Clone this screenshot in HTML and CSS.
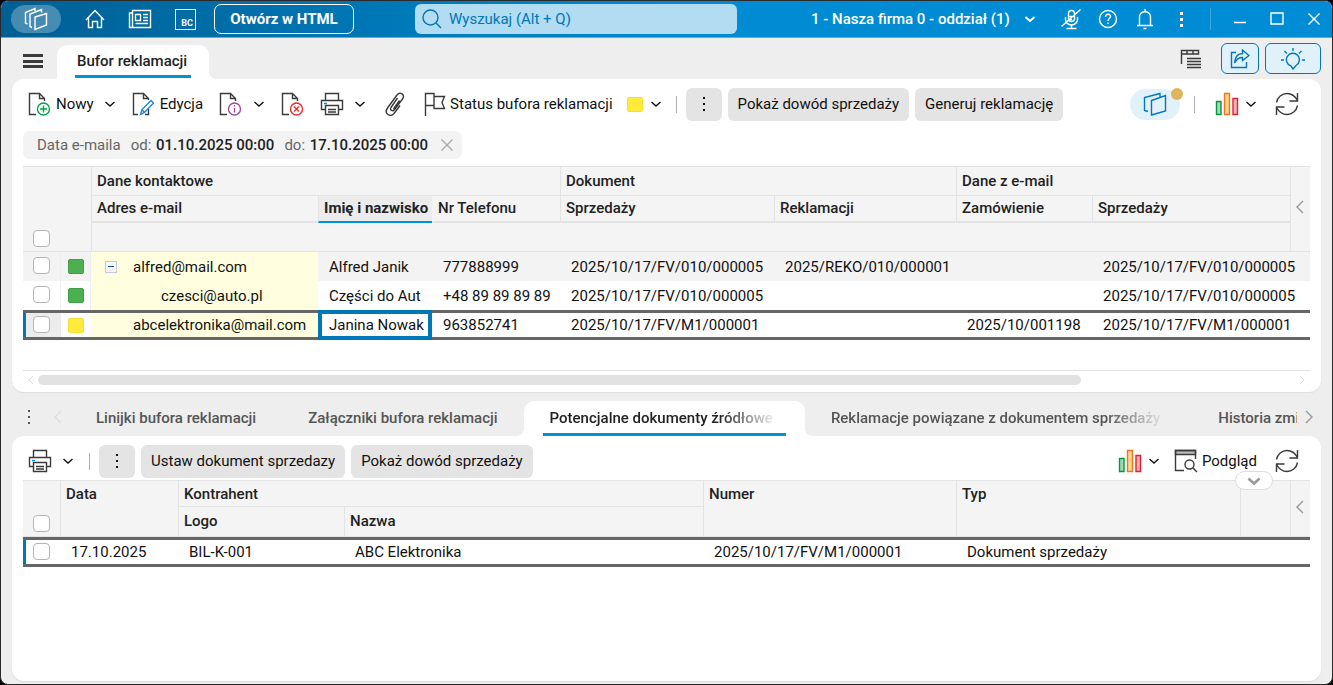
FILE: index.html
```html
<!DOCTYPE html>
<html lang="pl">
  <head>
    <meta charset="UTF-8" />
    <meta name="viewport" content="width=device-width, initial-scale=1.0" />
    <title>Bufor reklamacji</title>
    <link rel="stylesheet" href="styles.css">
  </head>
  <body>
    <!-- Ikony -->
    <svg class="sprite" aria-hidden="true">
      <symbol id="i-chevron" viewBox="0 0 12 8"><path d="M1.500 2l4.500 4 4.500-4" /></symbol>
      <symbol id="i-left" viewBox="0 0 8 14"><path d="M7 1L1 7l6 6" /></symbol>
      <symbol id="i-right" viewBox="0 0 8 14"><path d="M1 1l6 6-6 6" /></symbol>
      <symbol id="i-dots" viewBox="0 0 4 16">
        <path d="M1 1h2v2H1zM1 7h2v2H1zM1 13h2v2H1z" fill="currentColor" stroke="none" />
      </symbol>
      <symbol id="i-printer" viewBox="0 0 24 24">
        <path d="M5.500 8V1.500h13V8M5.500 17.500h-4v-9h21v9h-4M5.500 13.500h13v9h-13z" />
        <path d="M8 17.500h8M8 20h8" />
        <path d="M4 11.500h3" stroke="#0092d8" />
      </symbol>
      <symbol id="i-chart" viewBox="0 0 24 24">
        <path d="M1.500 9.500h4.500v13H1.500z" fill="#a5d8b3" stroke="#009a44" />
        <path d="M9.500 1.500h5v21h-5z" fill="#fdd58a" stroke="#ee7623" />
        <path d="M18 6.500h4.500v16H18z" fill="#f6b2b8" stroke="#e01f2d" />
      </symbol>
      <symbol id="i-refresh" viewBox="0 0 24 24">
        <path d="M1.500 10.500C2.500 5 7 1.500 12 1.500c4.500 0 8 2.500 10.500 7M22.500 1v8h-8M22.500 13.500C21.500 19 17 22.500 12 22.500c-4.500 0-8-2.500-10.500-7M1.500 23v-8h8" />
      </symbol>
    </svg>

    <div class="window">
      <!-- Pasek tytułowy -->
      <header class="titlebar">
        <button class="logo" aria-label="Menu główne">
          <svg width="24" height="24" viewBox="0 0 24 24">
            <path d="M3.500 17l-2-1V5.500l9.500-4v2.500M8 20.500l-2-1V7l11.500-4.500v3M11 10l11.500-3.500V18L11 22.500z" />
          </svg>
        </button>
        <nav class="quick">
          <a href="#" aria-label="Start">
            <svg width="20" height="20" viewBox="0 0 20 20"><path d="M1 11l9-9.500L19 11M3.500 9v9.500h4v-6h5v6h4V9" /></svg>
          </a>
          <a href="#" aria-label="Aktualności">
            <svg width="24" height="20" viewBox="0 0 24 20">
              <path d="M4.500 1.500h18v17h-18zM4.500 4h-3v14.500h3M7.500 5.500h5v6h-5zM15 5.500h5M15 8.500h5M15 11.500h5M7.500 14.500H20" />
            </svg>
          </a>
          <a class="bc" href="#">BC</a>
        </nav>
        <button class="open-html">Otwórz w HTML</button>
        <label class="search">
          <svg width="20" height="20" viewBox="0 0 20 20"><circle cx="8.500" cy="8.500" r="7.500" /><path d="M14 14l5 5" /></svg>
          <input type="text" aria-label="Wyszukaj" placeholder="Wyszukaj (Alt + Q)" />
        </label>
        <div class="company">
          <select aria-label="Firma i oddział">
            <option>1 - Nasza firma 0 - oddział (1)</option>
          </select>
          <svg class="chev bold" width="12" height="8"><use href="#i-chevron" /></svg>
        </div>
        <div class="title-buttons">
          <button aria-label="Mikrofon">
            <svg width="20" height="22" viewBox="0 0 20 22">
              <path d="M7.500 5.500a3 3 0 0 1 6 0v5a3 3 0 0 1-6 0zM4.500 9v2.500a6 5.500 0 0 0 12 0V9M10.500 17v3.500M5.500 20.500h10M8 8.500h3M8 11.500h3M19.500 1.500l-19 17" />
            </svg>
          </button>
          <button aria-label="Pomoc">
            <svg width="20" height="20" viewBox="0 0 20 20">
              <circle cx="10" cy="10" r="8.500" />
              <path d="M7.500 8c0-3.500 5-3.500 5-.5 0 2-2.500 2-2.500 4.500M10 13.500V15" />
            </svg>
          </button>
          <button aria-label="Powiadomienia">
            <svg width="18" height="22" viewBox="0 0 18 22">
              <path d="M1 17.500h16M3.500 17V9c0-7 11-7 11 0v8M9 1v2.500M7.500 20.500h3" />
            </svg>
          </button>
          <button aria-label="Więcej">
            <svg width="4" height="16" viewBox="0 0 4 16"><path d="M0 1h3v3H0zM0 7h3v3H0zM0 13h3v3H0z" fill="currentColor" stroke="none" /></svg>
          </button>
          <span class="title-sep"></span>
          <button aria-label="Minimalizuj"><svg width="14" height="14" viewBox="0 0 14 14"><path d="M1 10.500h12" /></svg></button>
          <button aria-label="Maksymalizuj"><svg width="14" height="14" viewBox="0 0 14 14"><path d="M1 1h12v11H1z" /></svg></button>
          <button aria-label="Zamknij"><svg width="14" height="14" viewBox="0 0 14 14"><path d="M1.500 1.500l11 11M12.500 1.500l-11 11" /></svg></button>
        </div>
      </header>

      <!-- Zakładki okna -->
      <div class="tabrow">
        <button class="hamburger" aria-label="Menu"><span></span><span></span><span></span></button>
        <button class="doc-tab">Bufor reklamacji</button>
        <div class="tabrow-right">
          <svg width="22" height="20" viewBox="0 0 22 20">
            <path d="M1.500 15V1.500h17V5h-17M7 1.500V5M13 1.500V5" />
            <path d="M7 9.500h14M7 12.500h14M7 15.500h14M7 18.500h14" />
          </svg>
          <button class="outline-btn share" aria-label="Udostępnij">
            <svg width="20" height="20" viewBox="0 0 20 20">
              <path d="M6 3.500H1.500v15h15V13M12.500 1l6.500 5.500-6.500 5V8.500c-4 0-6 1.500-8 5.500.5-6 3.500-9.500 8-9.500z" />
            </svg>
          </button>
          <button class="outline-btn hint" aria-label="Podpowiedzi">
            <svg width="26" height="22" viewBox="0 0 26 22">
              <path d="M11 18a6.500 6.500 0 1 1 5-.5L13 21z" />
              <path d="M13 0v3M4.500 3L7 5.500M21.500 3L19 5.500M1 12h3M22 12h3" />
            </svg>
          </button>
        </div>
      </div>

      <!-- Lista główna -->
      <main class="panel">
        <div class="toolbar">
          <button class="tool new">
            <svg width="24" height="24" viewBox="0 0 24 24">
              <path d="M8 22.500H1.500v-21h10l5 5V9M11.500 1.500v5h5" />
              <g stroke="#00a651"><circle cx="15.500" cy="17" r="6" /><path d="M15.500 13.500v7M12 17h7" /></g>
            </svg>
            Nowy
            <svg class="chev" width="12" height="8"><use href="#i-chevron" /></svg>
          </button>
          <button class="tool edit">
            <svg width="22" height="24" viewBox="0 0 22 24">
              <path d="M6 22.500H1.500v-21h10l5 5V8M11.500 1.500v5h5M16.500 17v5.500H13" />
              <path d="M8.500 22.500l1.500-5 9-9 2.500 2.500-9 9.500zM10 17.500l2.500 3" stroke="#1b87d6" />
            </svg>
            Edycja
          </button>
          <button class="tool info" aria-label="Informacje">
            <svg width="24" height="24" viewBox="0 0 24 24">
              <path d="M8 22.500H1.500v-21h10l5 5V9M11.500 1.500v5h5" />
              <g stroke="#a349a4"><circle cx="15.500" cy="17" r="6" /><path d="M15.500 16v4.500M15.500 13v1.500" /></g>
            </svg>
            <svg class="chev" width="12" height="8"><use href="#i-chevron" /></svg>
          </button>
          <button class="tool delete" aria-label="Usuń">
            <svg width="24" height="24" viewBox="0 0 24 24">
              <path d="M8 22.500H1.500v-21h10l5 5V9M11.500 1.500v5h5" />
              <g stroke="#ee2a2a"><circle cx="15.500" cy="17" r="6" /><path d="M13 14.500l5 5M18 14.500l-5 5" /></g>
            </svg>
          </button>
          <button class="tool print" aria-label="Drukuj">
            <svg width="24" height="24"><use href="#i-printer" /></svg>
            <svg class="chev" width="12" height="8"><use href="#i-chevron" /></svg>
          </button>
          <button class="tool attach" aria-label="Załączniki">
            <svg width="20" height="24" viewBox="0 0 20 24">
              <path d="M12.500 6L6 15.500c-1.500 2.500 1.500 4.500 3.500 2L17.500 7c3-4.500-2.500-8-5.500-4L2.500 16c-4 6 3 9.500 6.500 5.500l6-8M14.500 8.500L8.500 17" />
            </svg>
          </button>
          <button class="tool status">
            <svg width="22" height="24" viewBox="0 0 22 24">
              <path d="M1.500 24V1.500h8.500v12H1.500M10 4.500h10.500l-2.500 6 2.500 6H10z" />
            </svg>
            Status bufora reklamacji
            <span class="swatch yellow"></span>
            <svg class="chev" width="12" height="8"><use href="#i-chevron" /></svg>
          </button>
          <span class="sep"></span>
          <button class="btn more" aria-label="Więcej"><svg width="4" height="16"><use href="#i-dots" /></svg></button>
          <button class="btn">Pokaż dowód sprzedaży</button>
          <button class="btn">Generuj reklamację</button>
          <div class="toolbar-right">
            <button class="pill" aria-label="Asystent">
              <svg width="24" height="24" viewBox="0 0 24 24">
                <path d="M5 19.500l-3.500-1V5.500L17 1.500V5M8.500 8.500l14-5V19l-14 4z" />
              </svg>
              <span class="badge"></span>
            </button>
            <span class="sep"></span>
            <button class="tool chart" aria-label="Wykresy">
              <svg width="24" height="24"><use href="#i-chart" /></svg>
              <svg class="chev" width="12" height="8"><use href="#i-chevron" /></svg>
            </button>
            <button class="tool" aria-label="Odśwież"><svg width="24" height="24"><use href="#i-refresh" /></svg></button>
          </div>
        </div>

        <div class="filter">
          <span class="filter-name">Data e-maila</span>
          <span>od: <b>01.10.2025 00:00</b></span>
          <span>do: <b>17.10.2025 00:00</b></span>
          <button aria-label="Usuń filtr"><svg width="14" height="14" viewBox="0 0 14 14"><path d="M1.500 1.500l11 11M12.500 1.500l-11 11" /></svg></button>
        </div>

        <div class="grid-wrap">
          <table class="grid contacts">
            <colgroup>
              <col class="c-check" /><col class="c-color" /><col class="c-mail" /><col class="c-name" /><col class="c-phone" />
              <col class="c-doc" /><col class="c-claim" /><col class="c-order" /><col /><col class="c-arrow" />
            </colgroup>
            <thead>
              <tr class="group">
                <th class="corner" colspan="2" rowspan="3"><input type="checkbox" aria-label="Zaznacz wszystkie" /></th>
                <th colspan="3">Dane kontaktowe</th>
                <th colspan="2">Dokument</th>
                <th colspan="2">Dane z e-mail</th>
                <th class="arrow" rowspan="3"><svg width="8" height="14"><use href="#i-left" /></svg></th>
              </tr>
              <tr class="names">
                <th>Adres e-mail</th>
                <th class="sorted">Imię i nazwisko</th>
                <th class="plain">Nr Telefonu</th>
                <th>Sprzedaży</th>
                <th>Reklamacji</th>
                <th>Zamówienie</th>
                <th>Sprzedaży</th>
              </tr>
              <tr class="blank"><th colspan="7"></th></tr>
            </thead>
            <tbody>
              <tr class="odd">
                <td class="check"><input type="checkbox" aria-label="Zaznacz alfred@mail.com" /></td>
                <td class="color"><span class="swatch green"></span></td>
                <td class="mail"><button class="expander" aria-label="Zwiń"></button>alfred@mail.com</td>
                <td>Alfred Janik</td>
                <td>777888999</td>
                <td>2025/10/17/FV/010/000005</td>
                <td>2025/REKO/010/000001</td>
                <td></td>
                <td colspan="2">2025/10/17/FV/010/000005</td>
              </tr>
              <tr>
                <td class="check"><input type="checkbox" aria-label="Zaznacz czesci@auto.pl" /></td>
                <td class="color"><span class="swatch green"></span></td>
                <td class="mail child">czesci@auto.pl</td>
                <td>Części do Aut</td>
                <td>+48 89 89 89 89</td>
                <td>2025/10/17/FV/010/000005</td>
                <td></td>
                <td></td>
                <td colspan="2">2025/10/17/FV/010/000005</td>
              </tr>
              <tr class="selected">
                <td class="check"><input type="checkbox" aria-label="Zaznacz abcelektronika@mail.com" /></td>
                <td class="color"><span class="swatch yellow"></span></td>
                <td class="mail leaf">abcelektronika@mail.com</td>
                <td class="active">Janina Nowak</td>
                <td>963852741</td>
                <td>2025/10/17/FV/M1/000001</td>
                <td></td>
                <td>2025/10/001198</td>
                <td colspan="2">2025/10/17/FV/M1/000001</td>
              </tr>
            </tbody>
          </table>
        </div>
        <div class="scrollbar">
          <svg width="8" height="10" viewBox="0 0 8 14"><use href="#i-left" /></svg>
          <div class="track"><div class="thumb"></div></div>
          <svg width="8" height="10" viewBox="0 0 8 14"><use href="#i-right" /></svg>
        </div>
      </main>

      <!-- Zakładki szczegółów -->
      <div class="subtabs">
        <button class="sub-more" aria-label="Więcej zakładek"><svg width="4" height="16"><use href="#i-dots" /></svg></button>
        <button class="sub-nav off" aria-label="Poprzednie"><svg width="8" height="14"><use href="#i-left" /></svg></button>
        <div class="sub-list">
          <button class="sub-tab"><span>Linijki bufora reklamacji</span></button>
          <button class="sub-tab"><span>Załączniki bufora reklamacji</span></button>
          <button class="sub-tab current"><span class="fade">Potencjalne dokumenty źródłowe</span></button>
          <button class="sub-tab"><span class="fade">Reklamacje powiązane z dokumentem sprzedaży</span></button>
          <button class="sub-tab last"><span>Historia zmian</span></button>
        </div>
        <button class="sub-nav" aria-label="Następne"><svg width="8" height="14"><use href="#i-right" /></svg></button>
      </div>

      <!-- Szczegóły -->
      <section class="panel details">
        <div class="toolbar">
          <button class="tool print" aria-label="Drukuj">
            <svg width="24" height="24"><use href="#i-printer" /></svg>
            <svg class="chev" width="12" height="8"><use href="#i-chevron" /></svg>
          </button>
          <span class="sep"></span>
          <button class="btn more" aria-label="Więcej"><svg width="4" height="16"><use href="#i-dots" /></svg></button>
          <button class="btn">Ustaw dokument sprzedazy</button>
          <button class="btn">Pokaż dowód sprzedaży</button>
          <div class="toolbar-right">
            <button class="tool chart" aria-label="Wykresy">
              <svg width="24" height="24"><use href="#i-chart" /></svg>
              <svg class="chev" width="12" height="8"><use href="#i-chevron" /></svg>
            </button>
            <button class="tool preview">
              <svg width="24" height="24" viewBox="0 0 24 24">
                <path d="M1.500 1.500h20v4h-20z" fill="#bbb" />
                <path d="M10 21.500H1.500v-20h20V10" />
                <circle cx="15.500" cy="15.500" r="4.500" /><path d="M19 19l4 4" />
              </svg>
              Podgląd
            </button>
            <button class="tool" aria-label="Odśwież"><svg width="24" height="24"><use href="#i-refresh" /></svg></button>
          </div>
        </div>

        <div class="grid-wrap">
          <button class="handle" aria-label="Rozwiń"><svg class="chev bold" width="16" height="10" viewBox="0 0 12 8"><use href="#i-chevron" /></svg></button>
          <table class="grid documents">
            <colgroup>
              <col class="c-check" /><col class="c-date" /><col class="c-logo" /><col class="c-company" />
              <col class="c-number" /><col /><col class="c-extra" /><col class="c-arrow" />
            </colgroup>
            <thead>
              <tr class="names">
                <th class="corner" rowspan="2"><input type="checkbox" aria-label="Zaznacz wszystkie" /></th>
                <th class="tall" rowspan="2">Data</th>
                <th colspan="2">Kontrahent</th>
                <th class="tall" rowspan="2">Numer</th>
                <th class="tall" rowspan="2">Typ</th>
                <th class="tall" rowspan="2"></th>
                <th class="arrow" rowspan="2"><svg width="8" height="14"><use href="#i-left" /></svg></th>
              </tr>
              <tr class="names second">
                <th>Logo</th>
                <th>Nazwa</th>
              </tr>
            </thead>
            <tbody>
              <tr class="selected">
                <td class="check"><input type="checkbox" aria-label="Zaznacz dokument" /></td>
                <td>17.10.2025</td>
                <td>BIL-K-001</td>
                <td>ABC Elektronika</td>
                <td>2025/10/17/FV/M1/000001</td>
                <td colspan="3">Dokument sprzedaży</td>
              </tr>
            </tbody>
          </table>
        </div>
      </section>
    </div>
  </body>
</html>
```
FILE: styles.css
```css
:root {
  --blue: #0092d8;
  --blue-dark: #0077b6;
  --blue-light: #e1f1fa;
  --bg: #eeeeee;
  --head: #f4f4f4;
  --line: #e3e3e3;
  --button: #e4e4e4;
  --text: #111111;
  --icon: #3a3a3a;
}

* {
  margin: 0;
  padding: 0;
  box-sizing: border-box;
}

body {
  font-family: Roboto, "Liberation Sans", sans-serif;
  font-size: 15px;
  line-height: 20px;
  color: var(--text);
  background: #000;
}

button,
input,
select {
  font: inherit;
  color: inherit;
  background: none;
  border: none;
}

button {
  cursor: pointer;
  white-space: nowrap;
}

svg {
  display: block;
  flex: none;
  fill: none;
  stroke: currentColor;
  stroke-width: 1.4;
}

.sprite {
  position: absolute;
  width: 0;
  height: 0;
}

.bold {
  stroke-width: 2;
}

.window {
  min-height: 100vh;
  display: flex;
  flex-direction: column;
  background: var(--bg);
  border: 1px solid #2a2a2a;
  border-radius: 8px;
  overflow: hidden;
}

/* Pasek tytułowy */
.titlebar {
  height: 37px;
  display: flex;
  align-items: center;
  padding-left: 10px;
  color: #fff;
  background: linear-gradient(to right, #005f94, #0079b8 30%, #008bd2 50%, #008dd5);
  border-bottom: 1px solid #4db2e4;
}

.logo {
  width: 50px;
  height: 28px;
  display: flex;
  align-items: center;
  justify-content: center;
  border-radius: 14px;
  background: rgba(255, 255, 255, 0.27);
}

.quick {
  display: flex;
  align-items: center;
  gap: 23px;
  margin: 0 18px 0 24px;
}

.quick a {
  color: #fff;
  text-decoration: none;
}

.quick .bc {
  width: 21px;
  height: 21px;
  border: 1px solid #fff;
  font-size: 9px;
  font-weight: 700;
  line-height: 10px;
  padding: 8px 2px 0 0;
  text-align: right;
}

.open-html {
  width: 140px;
  height: 30px;
  border: 1px solid #fff;
  border-radius: 7px;
  font-weight: 700;
}

.search {
  width: 322px;
  height: 30px;
  margin-left: 61px;
  padding-left: 7px;
  display: flex;
  align-items: center;
  gap: 7px;
  border-radius: 6px;
  color: var(--blue-dark);
  background: #b2dcf2;
}

.search input {
  flex: 1;
  height: 28px;
  outline: none;
}

.search input::placeholder {
  color: var(--blue-dark);
  opacity: 1;
}

.company {
  display: flex;
  align-items: center;
  gap: 14px;
  margin: 0 16px 0 auto;
}

.company select {
  appearance: none;
  font-weight: 500;
}

.title-buttons {
  display: flex;
  align-items: center;
}

.title-buttons button {
  width: 37px;
  height: 36px;
  display: flex;
  align-items: center;
  justify-content: center;
}

.title-sep {
  width: 1px;
  height: 22px;
  margin: 0 10px;
  background: #3ba9de;
}

/* Zakładki okna */
.tabrow {
  height: 41px;
  display: flex;
  align-items: flex-end;
  padding: 0 11px 0 22px;
}

.hamburger {
  width: 20px;
  height: 34px;
  padding: 9px 0 11px;
  display: flex;
  flex-direction: column;
  justify-content: space-between;
}

.hamburger span {
  height: 3px;
  background: #3a3a3a;
}

.doc-tab,
.sub-tab.current {
  position: relative;
  border-radius: 10px 10px 0 0;
}

.doc-tab {
  height: 34px;
  margin-left: 14px;
  padding: 0 22px 2px 20px;
  font-weight: 500;
  color: #222;
  background: linear-gradient(var(--blue), var(--blue)) 50% 30px / calc(100% - 36px) 3px no-repeat #fff;
}

.doc-tab::after,
.sub-tab.current::after,
.sub-tab.current::before {
  content: "";
  position: absolute;
  bottom: 0;
  width: 8px;
  height: 8px;
}

.doc-tab::after,
.sub-tab.current::after {
  left: 100%;
  background: radial-gradient(circle at 100% 0, transparent 8px, #fff 8px);
}

.sub-tab.current::before {
  right: 100%;
  background: radial-gradient(circle at 0 0, transparent 8px, #fff 8px);
}

.tabrow-right {
  height: 41px;
  display: flex;
  align-items: center;
  gap: 6px;
  margin-left: auto;
  color: var(--icon);
}

.outline-btn {
  height: 31px;
  display: flex;
  align-items: center;
  justify-content: center;
  color: var(--blue-dark);
  background: var(--blue-light);
  border: 1px solid var(--blue-dark);
  border-radius: 6px;
}

.share {
  width: 38px;
  margin-left: 13px;
}

.hint {
  width: 56px;
}

/* Panele */
.panel {
  padding: 8px 11px 0;
  margin: 0 11px;
  background: #fff;
  border-radius: 12px;
  box-shadow: 0 1px 1px #ddd;
}

.toolbar {
  display: flex;
  align-items: center;
  gap: 6px;
  height: 34px;
  padding: 0 11px 0 5px;
}

.tool {
  display: flex;
  align-items: center;
  gap: 4px;
}

.tool > svg {
  color: var(--icon);
}

.tool .chev {
  margin-left: 6px;
  color: #111;
}

.tool.edit {
  gap: 6px;
}

.edit,
.info,
.delete {
  margin-left: 10px;
}

.delete + .print {
  margin-left: 9px;
}

.attach,
.status {
  margin-left: 13px;
}

.status .swatch {
  margin-left: 10px;
}

.status .chev {
  margin-left: 3px;
}

.sep {
  width: 1px;
  height: 17px;
  margin: 0 3px 0 8px;
  background: #b0b0b0;
}

.btn {
  height: 33px;
  padding: 0 10px;
  border-radius: 6px;
  background: var(--button);
}

.more {
  width: 36px;
  display: flex;
  align-items: center;
  justify-content: center;
}

.toolbar-right {
  display: flex;
  align-items: center;
  gap: 6px;
  margin-left: auto;
}

.chart {
  margin-right: 12px;
}

.tool.chart .chev {
  margin-left: 2px;
}

.toolbar-right .sep {
  margin-right: 14px;
}

.pill {
  position: relative;
  width: 50px;
  height: 31px;
  display: flex;
  align-items: center;
  justify-content: center;
  border-radius: 16px;
  color: var(--blue-dark);
  background: var(--blue-light);
}

.badge {
  position: absolute;
  top: -1px;
  right: -3px;
  width: 12px;
  height: 12px;
  border-radius: 50%;
  background: #e0b45c;
}

.swatch {
  display: block;
  width: 16px;
  height: 15px;
  border-radius: 2px;
}

.swatch.yellow {
  background: #ffeb3b;
  border: 1px solid #f8df38;
}

.swatch.green {
  background: #4caf50;
  border: 1px solid #3f9d44;
}

/* Filtr */
.filter {
  width: fit-content;
  height: 28px;
  margin: 10px 0 7px;
  padding: 0 8px 0 14px;
  display: flex;
  align-items: center;
  gap: 10px;
  color: #666;
  background: #f3f3f3;
  border-radius: 7px;
}

.filter b {
  margin-left: 1px;
  font-weight: 500;
  color: #222;
}

.filter button {
  margin-left: 2px;
  color: #aaa;
}

/* Tabele */
.grid-wrap {
  position: relative;
}

.grid {
  width: 100%;
  table-layout: fixed;
  border-collapse: separate;
  border-spacing: 0;
}

.c-check { width: 38px; }
.c-color { width: 30px; }
.c-mail { width: 227px; }
.c-name { width: 114px; }
.c-phone { width: 128px; }
.c-doc { width: 214px; }
.c-claim { width: 182px; }
.c-order { width: 136px; }
.c-arrow { width: 20px; }
.c-date { width: 118px; }
.c-logo { width: 166px; }
.c-company { width: 359px; }
.c-number { width: 253px; }
.c-extra { width: 50px; }

.documents .c-check {
  width: 37px;
}

.grid th {
  padding: 0 0 0 5px;
  font-weight: 500;
  text-align: left;
  white-space: nowrap;
  color: #222;
  background: var(--head);
  border-left: 1px solid var(--line);
  border-bottom: 1px solid var(--line);
}

.grid thead tr:first-child th {
  border-top: 1px solid var(--line);
}

.grid .corner {
  padding: 0 0 4px 10px;
  vertical-align: bottom;
  border-left: none;
}

.grid .arrow {
  padding: 0 0 4px 5px;
  color: #999;
}

.group th {
  height: 30px;
}

.names th {
  height: 27px;
}

.contacts .names th {
  padding-bottom: 2px;
  border-bottom-width: 2px;
}

.contacts .names .plain {
  border-left-color: var(--head);
}

.contacts .names .sorted {
  font-weight: 700;
  background: #ececec;
  border-bottom-color: var(--blue);
}

.blank th {
  height: 29px;
}

.grid .tall {
  padding-top: 3px;
  vertical-align: top;
}

.names.second th {
  height: 30px;
  padding-bottom: 2px;
}

.grid td {
  height: 29px;
  padding-left: 11px;
  white-space: nowrap;
}

.grid .odd td {
  background: #f3f3f3;
}

.grid .check {
  padding-left: 10px;
  padding-bottom: 2px;
  border-right: 1px solid #eee;
}

.grid .color {
  padding-left: 7px;
  border-right: 1px solid #eee;
}

.grid .mail,
.grid .odd .mail {
  padding-left: 14px;
  background: #ffffe0;
}

.grid .leaf {
  padding-left: 42px;
}

.grid .child {
  padding-left: 70px;
}

.grid .selected td {
  height: 30px;
  border-top: 3px solid #666;
  border-bottom: 3px solid #666;
}

.grid .selected .check,
.grid .selected .color {
  border-right: none;
}

.grid .selected .check {
  box-shadow: inset 3px 0 var(--blue-dark);
}

.contacts .selected .check {
  background: #ececec;
}

.grid .selected .active {
  padding-left: 7px;
  border: 4px solid var(--blue-dark);
}

.grid input {
  appearance: none;
  display: block;
  width: 17px;
  height: 17px;
  background: #fff;
  border: 1px solid #b5b5b5;
  border-radius: 4px;
}

.expander {
  display: inline-block;
  width: 12px;
  height: 12px;
  margin-right: 16px;
  border: 1px solid #c4cad3;
  background: linear-gradient(#1d4f9c, #1d4f9c) center / 6px 1px no-repeat #f6f8fb;
}

.contacts {
  margin-bottom: 30px;
}

.scrollbar {
  height: 22px;
  display: flex;
  align-items: center;
  gap: 3px;
  padding: 0 4px 3px;
  color: #d5d5d5;
  border-top: 1px solid var(--line);
}

.track {
  flex: 1;
}

.thumb {
  width: 83%;
  height: 10px;
  border-radius: 5px;
  background: #e2e2e2;
}

/* Zakładki szczegółów */
.subtabs {
  height: 44px;
  display: flex;
  align-items: flex-end;
  padding: 0 11px;
  color: #555;
}

.sub-more,
.sub-nav {
  height: 38px;
  display: flex;
  align-items: center;
  justify-content: center;
}

.sub-more {
  width: 34px;
}

.sub-nav {
  width: 24px;
  color: #999;
}

.off {
  color: #ddd;
}

.sub-list {
  flex: 1;
  min-width: 0;
  display: flex;
  overflow: hidden;
}

.sub-tab {
  flex: none;
  height: 35px;
  padding: 0 26px 2px;
  font-weight: 500;
}

.sub-tab span {
  display: block;
}

.sub-tab .fade {
  padding-right: 6px;
  mask-image: linear-gradient(to right, #000 calc(100% - 60px), transparent);
}

.sub-tab.current {
  color: #222;
  background: linear-gradient(var(--blue), var(--blue)) 50% 32px / calc(100% - 38px) 3px no-repeat #fff;
}

.details {
  flex: 1;
  margin-bottom: 3px;
}

.details .sep {
  margin-left: 9px;
}

.details .toolbar {
  margin-bottom: 2px;
}

.details .chart {
  margin-right: 8px;
}

.preview {
  margin-right: 12px;
}

.handle {
  position: absolute;
  top: -9px;
  right: 37px;
  width: 38px;
  height: 19px;
  display: flex;
  align-items: center;
  justify-content: center;
  color: #999;
  background: #fff;
  border: 1px solid #ddd;
  border-radius: 10px;
}
```
